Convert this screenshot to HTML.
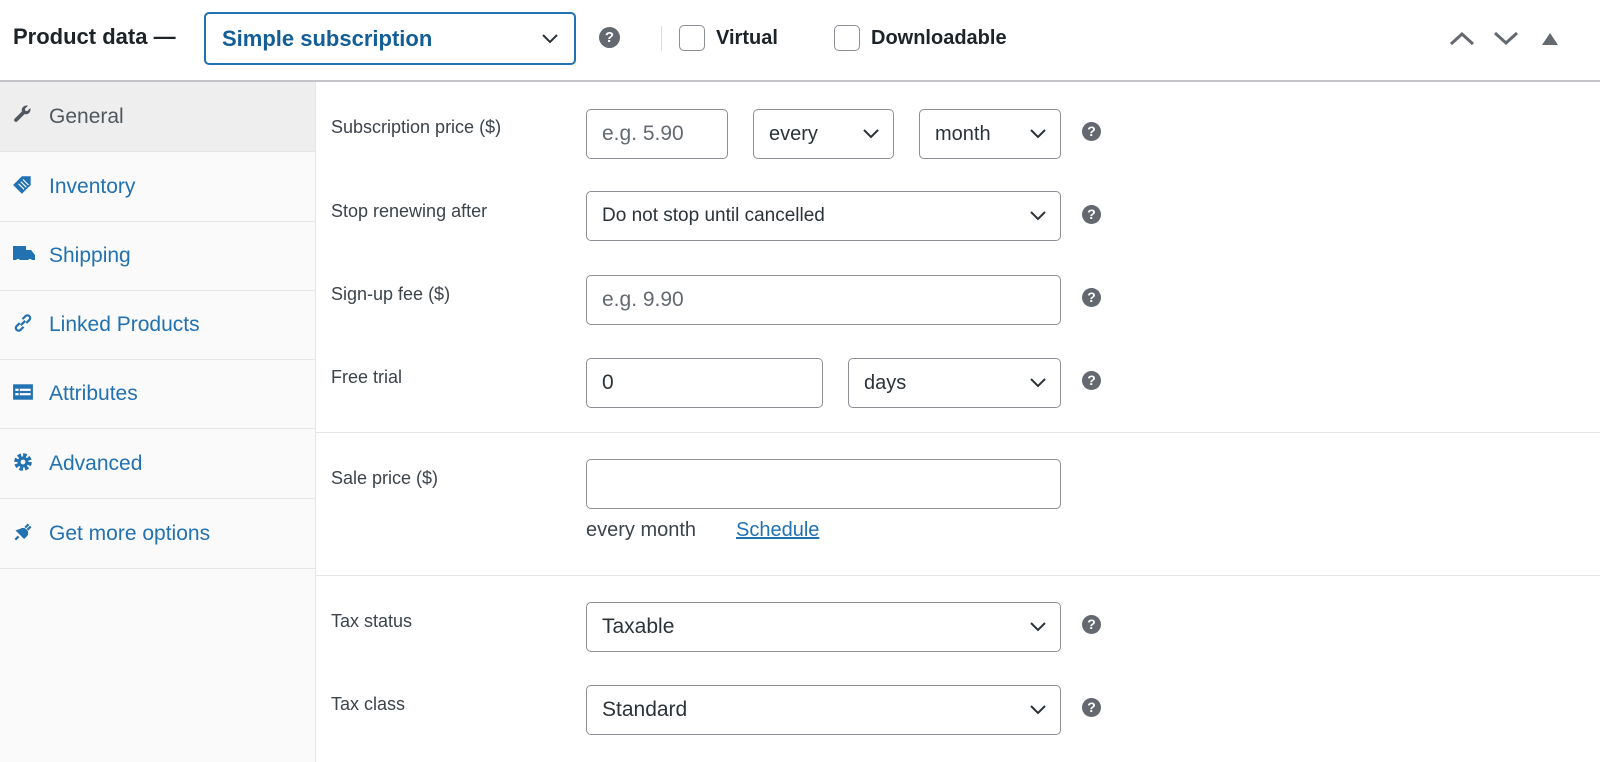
<!DOCTYPE html>
<html><head><style>
*{box-sizing:border-box;margin:0;padding:0}
body{width:1600px;height:762px;overflow:hidden;background:#fff;font-family:"Liberation Sans",Arial,sans-serif;position:relative;color:#3c434a}
.a{position:absolute}
.hdr{left:0;top:0;width:1600px;height:82px;border-bottom:2px solid #c3c4c7;background:#fff}
.side{left:0;top:82px;width:316px;height:680px;background:#fafafa;border-right:1px solid #e6e6e6}
.tab{position:absolute;left:0;width:315px;height:70px;border-bottom:1px solid #e6e6e6;color:#2271b1;font-size:21px}
.tab span{position:absolute;left:49px;top:23px}
.tab svg{position:absolute;left:12px;top:22px}
.lbl{position:absolute;left:331px;font-size:18px;color:#3c434a}
.box{position:absolute;border:1px solid #8c8f94;border-radius:5px;background:#fff;height:50px;font-size:21px;color:#2c3338;padding:0 15px;line-height:48px}
.ph{color:#646970}
.chev{position:absolute;right:14px;top:19px}
.help{position:absolute;left:1082px;width:19px;height:19px;border-radius:50%;background:#646970;color:#fff;font-size:14px;font-weight:bold;text-align:center;line-height:19px}
.sep{position:absolute;left:316px;width:1284px;height:1px;background:#e6e6e6}
</style></head><body>
<div class="a hdr"></div>
<div class="a" style="left:13px;top:24px;font-size:22px;font-weight:bold;color:#1d2327">Product data —</div>
<div class="a" style="left:204px;top:12px;width:372px;height:53px;border:2px solid #2271b1;border-radius:5px;font-size:22px;color:#1d4f7c;font-weight:bold;padding-left:16px;line-height:50px;color:#135e96">Simple subscription
<svg class="chev" style="top:20px;right:16px" width="16" height="10" viewBox="0 0 16 10"><path d="M1 1l7 7 7-7" fill="none" stroke="#2c3338" stroke-width="2"/></svg></div>
<div class="a" style="left:599px;top:27px;width:21px;height:21px;border-radius:50%;background:#646970;color:#fff;font-size:15px;font-weight:bold;text-align:center;line-height:21px">?</div>
<div class="a" style="left:661px;top:26px;width:1px;height:25px;background:#dcdcde"></div>
<div class="a" style="left:679px;top:25px;width:26px;height:26px;border:1px solid #8c8f94;border-radius:5px"></div>
<div class="a" style="left:716px;top:27px;font-size:20px;font-weight:bold;color:#1d2327">Virtual</div>
<div class="a" style="left:834px;top:25px;width:26px;height:26px;border:1px solid #8c8f94;border-radius:5px"></div>
<div class="a" style="left:871px;top:27px;font-size:20px;font-weight:bold;color:#1d2327">Downloadable</div>
<svg class="a" style="left:1449px;top:31px" width="26" height="15" viewBox="0 0 26 15"><path d="M2 13L13 3l11 10" fill="none" stroke="#646970" stroke-width="3"/></svg>
<svg class="a" style="left:1493px;top:31px" width="26" height="15" viewBox="0 0 26 15"><path d="M2 2l11 10 11-10" fill="none" stroke="#646970" stroke-width="3"/></svg>
<svg class="a" style="left:1542px;top:33px" width="16" height="12" viewBox="0 0 16 12"><path d="M8 0L16 12H0z" fill="#646970"/></svg>

<div class="a side"></div>
<div class="tab" style="top:82px;background:#eee;color:#50575e"><svg width="22" height="22" viewBox="0 0 20 20"><path d="M16.7 3.6l-2.9 2.9-1.7-.4-.4-1.7 2.9-2.9c-1.6-.5-3.5 0-4.6 1.2-1.1 1.1-1.4 2.7-1 4.1L2.4 13.4c-.7.7-.7 1.7 0 2.4s1.7.7 2.4 0l6.6-6.6c1.4.4 3 .1 4.1-1 1.2-1.2 1.6-3 1.2-4.6z" fill="#50575e"/></svg><span>General</span></div>
<div class="tab" style="top:152px"><svg width="22" height="22" viewBox="0 0 20 20"><path d="M9 2l8 0 0 8-8 8-8-8z" fill="#2271b1" transform="rotate(0)"/><path d="M6 9l5 5M8 7l5 5M10 5l5 5" stroke="#fff" stroke-width="1"/></svg><span>Inventory</span></div>
<div class="tab" style="top:221px"><svg width="24" height="22" viewBox="0 0 24 22"><path d="M1 3h13v4h5l4 5v5H1z" fill="#2271b1"/><circle cx="6" cy="18" r="2" fill="#fff"/><circle cx="18" cy="18" r="2" fill="#fff"/></svg><span>Shipping</span></div>
<div class="tab" style="top:290px"><svg width="22" height="22" viewBox="0 0 20 20"><path d="M8 12l4-4M7 10l-3 3a2.5 2.5 0 003.5 3.5l3-3M13 10l3-3A2.5 2.5 0 0012.5 3.5l-3 3" fill="none" stroke="#2271b1" stroke-width="2"/></svg><span>Linked Products</span></div>
<div class="tab" style="top:359px"><svg width="22" height="22" viewBox="0 0 20 20"><rect x="1" y="3" width="18" height="14" fill="#2271b1"/><rect x="3" y="7" width="3" height="2" fill="#fff"/><rect x="7" y="7" width="10" height="2" fill="#fff"/><rect x="3" y="11" width="3" height="2" fill="#fff"/><rect x="7" y="11" width="10" height="2" fill="#fff"/></svg><span>Attributes</span></div>
<div class="tab" style="top:429px"><svg width="22" height="22" viewBox="0 0 20 20"><circle cx="10" cy="10" r="6" fill="none" stroke="#2271b1" stroke-width="4" stroke-dasharray="3 1.7"/><circle cx="10" cy="10" r="5" fill="#2271b1"/><circle cx="10" cy="10" r="2.2" fill="#fafafa"/></svg><span>Advanced</span></div>
<div class="tab" style="top:499px"><svg width="22" height="22" viewBox="0 0 20 20"><path d="M3 17l3-3M5 9l6 6 2-2c1-1 1-3 0-4l-1-1c-1-1-3-1-4 0zM12 6l3-3M14 8l3-3" fill="#2271b1" stroke="#2271b1" stroke-width="2"/></svg><span>Get more options</span></div>

<div class="lbl" style="top:117px">Subscription price ($)</div>
<div class="box ph" style="left:586px;top:109px;width:142px">e.g. 5.90</div>
<div class="box" style="left:753px;top:109px;width:141px;font-size:20px">every<svg class="chev" width="16" height="10" viewBox="0 0 16 10"><path d="M1 1l7 7 7-7" fill="none" stroke="#2c3338" stroke-width="2"/></svg></div>
<div class="box" style="left:919px;top:109px;width:142px;font-size:20px">month<svg class="chev" width="16" height="10" viewBox="0 0 16 10"><path d="M1 1l7 7 7-7" fill="none" stroke="#2c3338" stroke-width="2"/></svg></div>
<div class="help" style="top:122px">?</div>

<div class="lbl" style="top:201px">Stop renewing after</div>
<div class="box" style="left:586px;top:191px;width:475px;font-size:19px">Do not stop until cancelled<svg class="chev" width="16" height="10" viewBox="0 0 16 10"><path d="M1 1l7 7 7-7" fill="none" stroke="#2c3338" stroke-width="2"/></svg></div>
<div class="help" style="top:205px">?</div>

<div class="lbl" style="top:284px">Sign-up fee ($)</div>
<div class="box ph" style="left:586px;top:275px;width:475px">e.g. 9.90</div>
<div class="help" style="top:288px">?</div>

<div class="lbl" style="top:367px">Free trial</div>
<div class="box" style="left:586px;top:358px;width:237px">0</div>
<div class="box" style="left:848px;top:358px;width:213px;font-size:20px">days<svg class="chev" width="16" height="10" viewBox="0 0 16 10"><path d="M1 1l7 7 7-7" fill="none" stroke="#2c3338" stroke-width="2"/></svg></div>
<div class="help" style="top:371px">?</div>

<div class="sep" style="top:432px"></div>

<div class="lbl" style="top:468px">Sale price ($)</div>
<div class="box" style="left:586px;top:459px;width:475px"></div>
<div class="a" style="left:586px;top:519px;font-size:20px;color:#3c434a">every month</div>
<div class="a" style="left:736px;top:519px;font-size:20px;color:#2271b1;text-decoration:underline">Schedule</div>

<div class="sep" style="top:575px"></div>

<div class="lbl" style="top:611px">Tax status</div>
<div class="box" style="left:586px;top:602px;width:475px">Taxable<svg class="chev" width="16" height="10" viewBox="0 0 16 10"><path d="M1 1l7 7 7-7" fill="none" stroke="#2c3338" stroke-width="2"/></svg></div>
<div class="help" style="top:615px">?</div>

<div class="lbl" style="top:694px">Tax class</div>
<div class="box" style="left:586px;top:685px;width:475px">Standard<svg class="chev" width="16" height="10" viewBox="0 0 16 10"><path d="M1 1l7 7 7-7" fill="none" stroke="#2c3338" stroke-width="2"/></svg></div>
<div class="help" style="top:698px">?</div>
</body></html>
